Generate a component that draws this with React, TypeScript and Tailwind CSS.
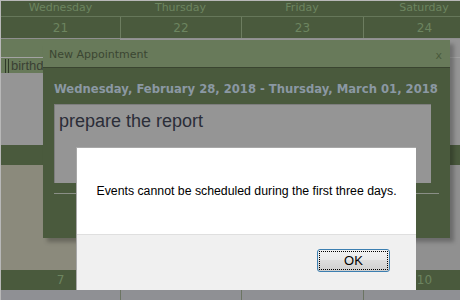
import React from "react";

const cols = ["w-[119px]", "w-[121px] border-l", "w-[122px] border-l", "w-[122px] border-l"];

function NumRow({ nums, h }: { nums: string[]; h: string }) {
  return (
    <div className={`flex ${h} bg-[#4a5a3d] shrink-0`}>
      {nums.map((n, i) => (
        <div
          key={i}
          className={`${cols[i]} border-[#6d7d60] shrink-0 flex items-center justify-center text-[12px] text-[#6d8560]`}
        >
          {n}
        </div>
      ))}
    </div>
  );
}

export default function App() {
  return (
    <div
      className="relative w-[460px] h-[300px] overflow-hidden bg-[#959595] border-l border-t border-[#b8b8b8]"
      style={{ fontFamily: '"DejaVu Sans", Verdana, sans-serif' }}
    >
      {/* calendar */}
      <div className="flex flex-col w-[484px] h-full">
        <div className="flex h-[16px] bg-[#4a5a3d] border-b border-[#66775a] shrink-0">
          {["Wednesday", "Thursday", "Friday", "Saturday"].map((d, i) => (
            <div
              key={d}
              className={`${["w-[119px]", "w-[121px]", "w-[122px]", "w-[122px]"][i]} shrink-0 flex items-center justify-center text-[11px] text-[#6d8560]`}
            >
              {d}
            </div>
          ))}
        </div>
        <NumRow nums={["21", "22", "23", "24"]} h="h-[21px]" />
        <div className="h-[1px] bg-[#8f8f8f] shrink-0" />
        <div className="flex h-[18px] shrink-0">
          <div className="w-[119px] bg-[#687a5a]" />
          <div className="flex-1 bg-[#959595]" />
        </div>
        <div className="h-[1px] bg-[#a3a3a3] shrink-0" />
        <div className="flex h-[15px] shrink-0 bg-[#687a5a] w-[119px] items-center">
          <div className="ml-[4px] w-[1px] h-[14px] bg-[#2f3a28]" />
          <div className="ml-[2px] w-[1px] h-[14px] bg-[#2f3a28]" />
          <span
            className="ml-[2px] text-[13px] leading-none text-[#3a4034]"
            style={{ fontFamily: '"Liberation Sans", Arial, sans-serif' }}
          >
            birthday
          </span>
        </div>
        <div className="h-[72px] shrink-0 bg-[#959595]" />
        <NumRow nums={["28", "1", "2", "3"]} h="h-[20px]" />
        <div className="flex h-[105px] shrink-0">
          <div className="w-[119px] bg-[#8b8a7c]" />
          <div className="flex-1 bg-[#909090]" />
        </div>
        <NumRow nums={["7", "8", "9", "10"]} h="h-[20px]" />
        <div className="flex flex-1 bg-[#8f9094]">
          {cols.map((c, i) => (
            <div key={i} className={`${c} border-[#6b7462] shrink-0`} />
          ))}
        </div>
      </div>

      {/* appointment dialog */}
      <div className="absolute left-[42px] top-[39px] w-[407px] h-[198px] flex flex-col shadow-[4px_4px_4px_rgba(0,0,0,0.25)]">
        <div className="h-[28px] bg-[#687a5a] border-b border-[#3a4530] flex items-center justify-between pl-[6px] pr-[8px] pt-[3px] shrink-0">
          <span className="text-[11px] text-[#3b4632]">New Appointment</span>
          <span className="text-[11px] text-[#4a5a3d] leading-none">x</span>
        </div>
        <div className="flex-1 bg-[#4a5a3d] px-[11px] pt-[14px]">
          <div className="text-[11.6px] font-bold text-[#8b98a3] leading-[14px] whitespace-nowrap">
            Wednesday, February 28, 2018 - Thursday, March 01, 2018
          </div>
          <div className="mt-[8px] w-[377px] h-[79px] bg-[#959595] border-t border-l border-[#7d7d7d] px-[4px] pt-[3px]">
            <span
              className="text-[18px] text-[#2b2d38] leading-[26px]"
              style={{ fontFamily: '"Liberation Sans", Arial, sans-serif' }}
            >
              prepare the report
            </span>
          </div>
          <div className="mt-[10px] w-[385px] h-[1px] bg-[#8a8f86]" />
        </div>
      </div>

      {/* alert */}
      <div
        className="absolute left-[75px] top-[146px] w-[340px] h-[143px] flex flex-col bg-white border-l border-t border-[#a8a8a8]"
        style={{ fontFamily: '"Liberation Sans", Arial, sans-serif' }}
      >
        <div className="h-[86px] flex items-center justify-center text-[12.3px] text-black">
          Events cannot be scheduled during the first three days.
        </div>
        <div className="flex-1 bg-[#f0f0f0] border-t border-[#dfdfdf] flex justify-end items-start pt-[14px] pr-[26px]">
          <button className="w-[73px] h-[23px] rounded-[3px] border border-[#3c7fb1] bg-[linear-gradient(#f2f2f2_0%,#ebebeb_45%,#dddddd_50%,#cfcfcf_100%)] p-[1px]">
            <div className="w-full h-full border border-dotted border-black flex items-center justify-center text-[13px] text-black">
              OK
            </div>
          </button>
        </div>
      </div>
    </div>
  );
}
